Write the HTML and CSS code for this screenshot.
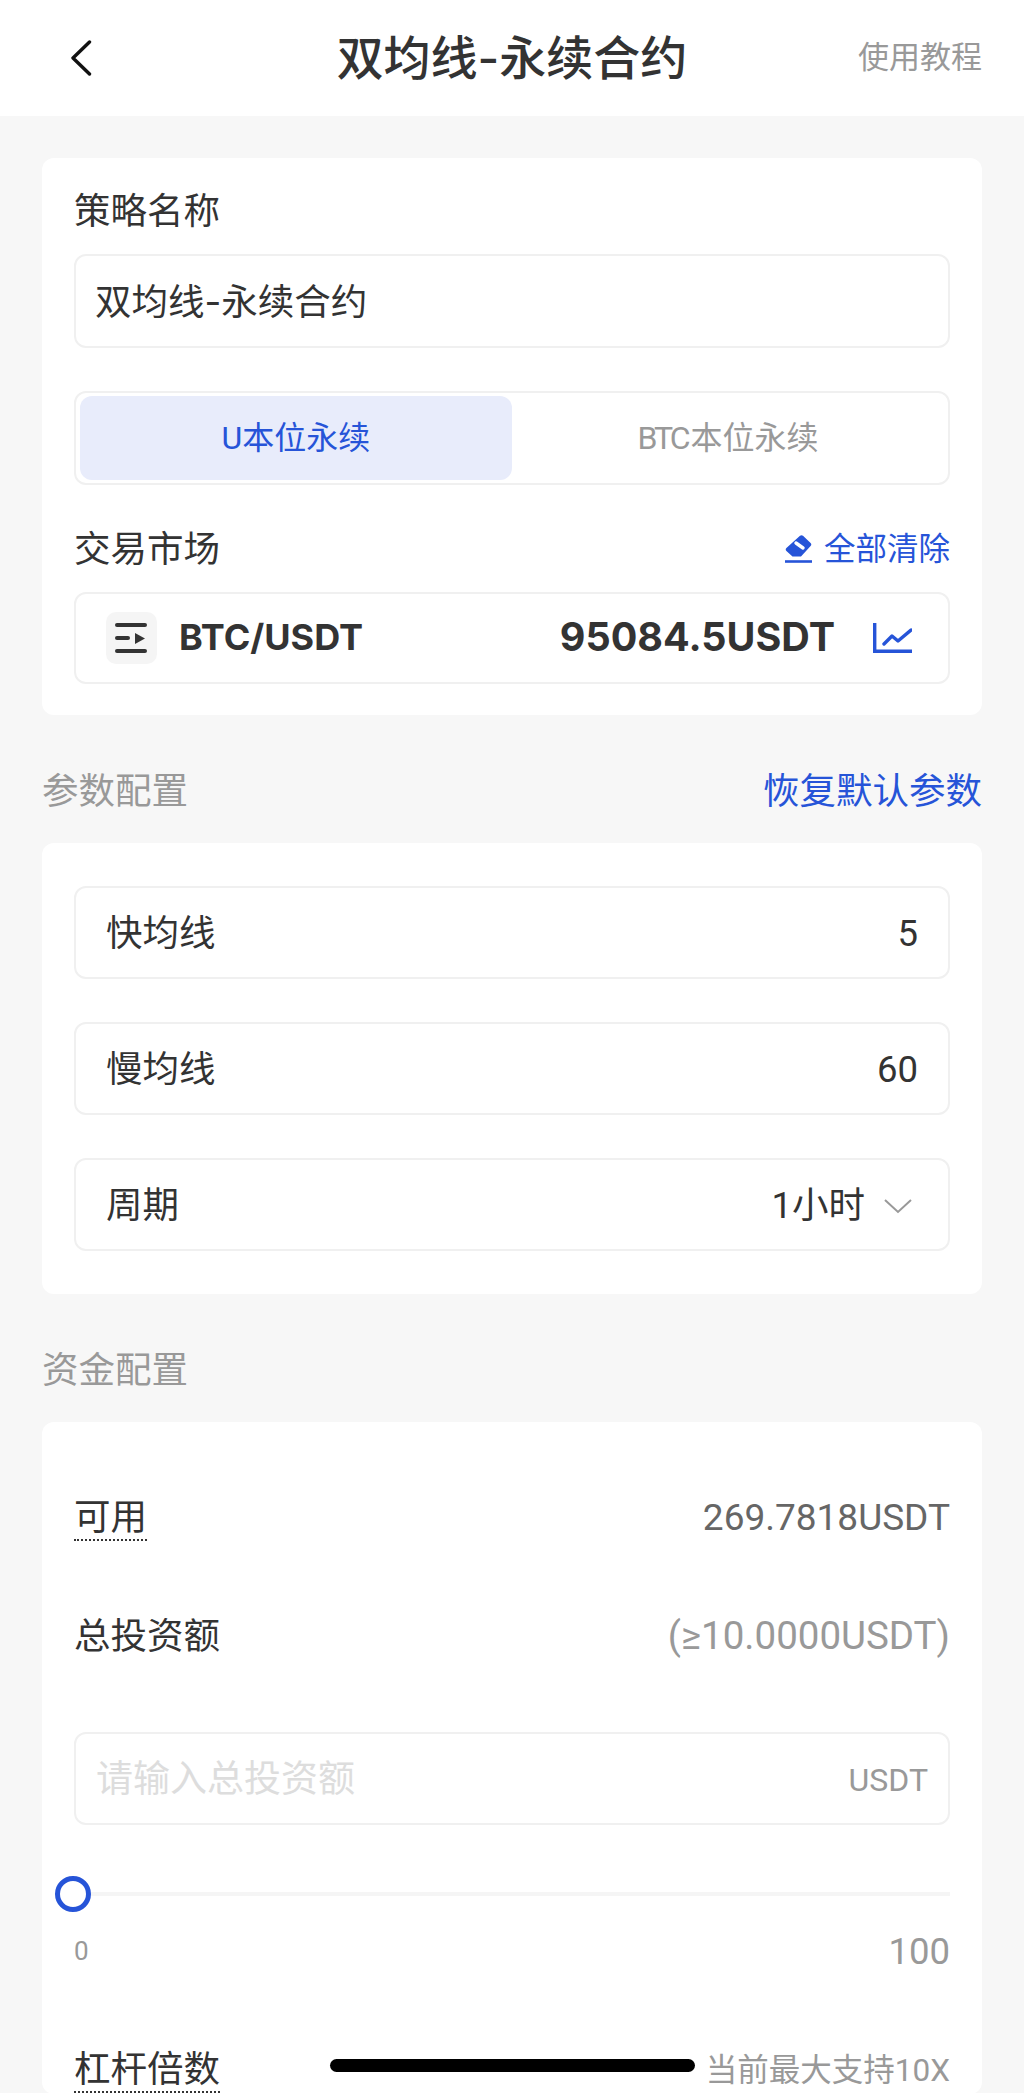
FILE: index.html
```html
<!DOCTYPE html>
<html lang="zh-CN">
<head>
  <meta charset="UTF-8">
  <meta name="viewport" content="width=device-width, initial-scale=1.0">
  <title>双均线-永续合约</title>
  <link rel="stylesheet" href="styles.css">
</head>
<body>
  <div class="page">
    <header class="topbar">
      <svg class="back-icon" viewBox="0 0 22 36" fill="none" stroke="#111" stroke-width="3.4" stroke-linecap="round" stroke-linejoin="round"><path d="M19.5 2 L3 18 L19.5 34"/></svg>
      <h1 class="title">双均线-永续合约</h1>
      <span class="help">使用教程</span>
    </header>

    <main class="content">
      <section class="card card-first">
        <div class="row-label">策略名称</div>
        <div class="field field-name">双均线-永续合约</div>

        <div class="segment">
          <div class="segment-item active">U本位永续</div>
          <div class="segment-item"><span class="tight">BTC</span>本位永续</div>
        </div>

        <div class="row-label row-market">
          <span>交易市场</span>
          <span class="clear">
            <svg class="clear-icon" viewBox="0 0 27 28"><path d="M15 0.8 Q16.5 -0.4 18 0.8 L25.6 8 Q27 9.5 25.6 11 L16 21.5 H7.5 L1.4 16 Q0 14.5 1.4 13 Z" fill="#2654d8"/><path d="M11 8 L18 13" stroke="#fff" stroke-width="3.4" stroke-linecap="round"/><path d="M0 26.5 H27" stroke="#2654d8" stroke-width="2.6"/></svg>
            全部清除
          </span>
        </div>
        <div class="field market">
          <span class="market-icon">
            <svg viewBox="0 0 51 52" fill="none" stroke="#333" stroke-width="4" stroke-linecap="round"><path d="M11 13 H39"/><path d="M11 26 H22"/><path d="M11 39 H39"/><path d="M29 21 L39 26.5 L29 32 Z" fill="#333" stroke="none"/></svg>
          </span>
          <span class="market-name">BTC/USDT</span>
          <span class="market-price">95084.5USDT</span>
          <svg class="chart-icon" viewBox="0 0 39 30" fill="none" stroke="#2654d8" stroke-width="3.4"><path d="M1.7 0 V28.3 H39"/><path d="M11 21 L19 13 L25 18 L38 7" stroke-linejoin="round" stroke-linecap="round"/></svg>
        </div>
      </section>

      <div class="section-head">
        <span class="section-title">参数配置</span>
        <span class="section-link">恢复默认参数</span>
      </div>

      <section class="card card-params">
        <div class="field param"><span>快均线</span><span>5</span></div>
        <div class="field param"><span>慢均线</span><span>60</span></div>
        <div class="field param">
          <span>周期</span>
          <span class="select">1小时
            <svg class="chevron" viewBox="0 0 28 16" fill="none" stroke="#999" stroke-width="2"><path d="M1 2 L14 14 L27 2"/></svg>
          </span>
        </div>
      </section>

      <div class="section-head">
        <span class="section-title">资金配置</span>
      </div>

      <section class="card card-funds">
        <div class="row-label">
          <span class="dotted">可用</span>
          <span class="balance">269.7818USDT</span>
        </div>
        <div class="row-label row-total">
          <span>总投资额</span>
          <span class="min-amount">(≥10.0000USDT)</span>
        </div>
        <div class="field field-amount">
          <span class="placeholder">请输入总投资额</span>
          <span class="unit">USDT</span>
        </div>
        <div class="slider">
          <div class="slider-track"></div>
          <div class="slider-thumb"></div>
        </div>
        <div class="slider-labels">
          <span class="slider-min">0</span>
          <span class="slider-max">100</span>
        </div>
        <div class="row-label row-leverage">
          <span class="dotted">杠杆倍数</span>
          <span class="leverage-note">当前最大支持10X</span>
        </div>
      </section>
    </main>

    <div class="home-indicator"></div>
  </div>
</body>
</html>
```

FILE: styles.css
```css
* {
  box-sizing: border-box;
}

html, body {
  margin: 0;
  padding: 0;
}

body {
  font-family: Roboto, "Noto Sans CJK SC", sans-serif;
  font-size: 36.5px;
  line-height: 1.2;
  color: #333;
  background-color: #f7f7f7;
}

.page {
  position: relative;
  height: 2093px;
  overflow: hidden;
}

/* Top bar */
.topbar {
  position: relative;
  display: flex;
  align-items: center;
  justify-content: space-between;
  height: 116px;
  padding: 0 42px 0 70px;
  background-color: #fff;
}

.back-icon {
  width: 22px;
  height: 36px;
}

.title {
  position: absolute;
  left: 0;
  right: 0;
  margin: 0;
  text-align: center;
  font-family: Inter, "Noto Sans CJK SC", sans-serif;
  font-size: 47px;
  font-weight: 500;
  line-height: 60px;
}

.help {
  font-size: 31px;
  color: #999;
}

/* Cards */
.content {
  padding: 0 42px;
}

.card {
  padding: 0 32px;
  background-color: #fff;
  border-radius: 12px;
}

.card-first {
  margin-top: 42px;
  padding-top: 27px;
  padding-bottom: 31px;
}

.card-params {
  display: flex;
  flex-direction: column;
  gap: 43px;
  padding-top: 43px;
  padding-bottom: 43px;
}

.card-funds {
  padding-top: 70px;
}

.row-label {
  display: flex;
  align-items: center;
  justify-content: space-between;
  height: 50px;
  padding-top: 3px;
}

.row-market {
  margin-top: 38px;
}

.row-total {
  margin-top: 68px;
}

.row-leverage {
  margin-top: 67px;
}

.field {
  display: flex;
  align-items: center;
  justify-content: space-between;
  height: 93px;
  padding-top: 3px;
  border: 2px solid #f0f0f0;
  border-radius: 12px;
}

.field-name {
  height: 94px;
  margin-top: 19px;
  padding: 3px 19px 0;
  font-family: Inter, "Noto Sans CJK SC", sans-serif;
}

/* Contract type switch */
.segment {
  display: flex;
  height: 94px;
  margin-top: 43px;
  padding: 3px 4px;
  border: 2px solid #f0f0f0;
  border-radius: 12px;
}

.segment-item {
  flex: 1;
  display: flex;
  align-items: center;
  justify-content: center;
  font-size: 32px;
  color: #999;
  border-radius: 12px;
}

.segment-item.active {
  color: #2654d8;
  background-color: #e8ecfb;
}

.tight {
  letter-spacing: -3px;
  margin-right: 3px;
}

.clear {
  display: flex;
  align-items: center;
  gap: 12px;
  font-size: 31.5px;
  color: #2654d8;
}

.clear-icon {
  width: 27px;
  height: 28px;
}

/* Market picker */
.market {
  height: 92px;
  margin-top: 19px;
  padding: 0 36px 0 30px;
  font-family: Inter, "Noto Sans CJK SC", sans-serif;
}

.market-icon {
  width: 51px;
  height: 52px;
  background-color: #f5f5f5;
  border-radius: 10px;
}

.market-icon svg {
  display: block;
  width: 51px;
  height: 52px;
}

.market-name {
  margin-left: 22px;
  font-size: 36px;
  font-weight: 700;
}

.market-price {
  margin-left: auto;
  font-size: 39.5px;
  font-weight: 700;
}

.chart-icon {
  width: 39px;
  height: 30px;
  margin-left: 38px;
}

/* Section headings */
.section-head {
  display: flex;
  align-items: center;
  justify-content: space-between;
  height: 128px;
  padding-top: 25px;
}

.section-title {
  color: #999;
}

.section-link {
  color: #2654d8;
}

/* Parameters */
.param {
  padding: 3px 30px 0;
}

.select {
  display: flex;
  align-items: center;
  gap: 19px;
  margin-right: 6px;
}

.chevron {
  width: 28px;
  height: 16px;
}

/* Funds */
.dotted {
  display: inline-block;
  height: 45px;
  line-height: 44px;
  border-bottom: 2px dotted #333;
}

.balance {
  font-size: 37px;
  color: #666;
}

.min-amount {
  font-size: 38.5px;
  color: #999;
}

.field-amount {
  margin-top: 72px;
  padding: 3px 20px 0;
}

.placeholder {
  font-size: 37px;
  color: #ddd;
}

.unit {
  font-size: 32px;
  color: #999;
}

.slider {
  position: relative;
  display: flex;
  align-items: center;
  height: 36px;
  margin-top: 51px;
}

.slider-track {
  width: 100%;
  height: 4px;
  background-color: #f5f5f5;
}

.slider-thumb {
  position: absolute;
  left: -19px;
  top: 0;
  width: 36px;
  height: 36px;
  background-color: #fff;
  border: 5px solid #2654d8;
  border-radius: 50%;
}

.slider-labels {
  display: flex;
  align-items: center;
  justify-content: space-between;
  height: 50px;
  margin-top: 15px;
  color: #999;
}

.slider-min {
  font-size: 26px;
}

.leverage-note {
  font-size: 31.5px;
  color: #999;
}

/* Overlay bar at the bottom of the phone screen */
.home-indicator {
  position: absolute;
  left: 330px;
  top: 2059px;
  width: 365px;
  height: 13px;
  background-color: #000;
  border-radius: 7px;
}
```
